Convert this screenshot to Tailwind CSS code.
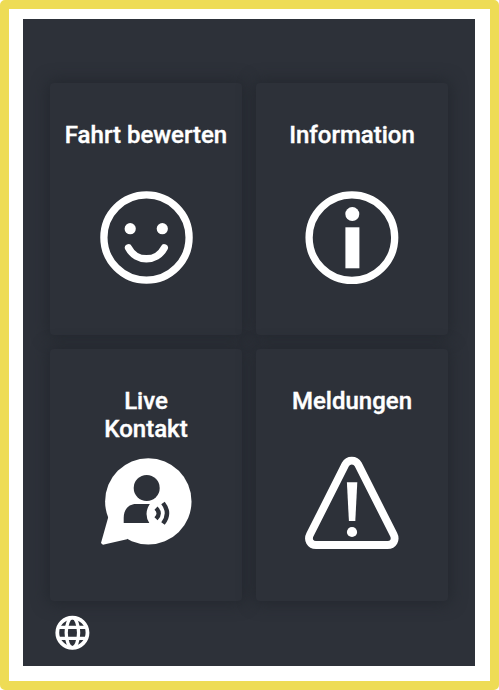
<!DOCTYPE html>
<html lang="de">
<head>
  <meta charset="UTF-8" />
  <meta name="viewport" content="width=device-width, initial-scale=1.0" />
  <title>Menü</title>
  <script src="https://cdn.jsdelivr.net/npm/@tailwindcss/browser@4"></script>
</head>
<body class="bg-white font-['Roboto',sans-serif]">

  <div class="w-[499px] h-[690px] rounded-[5px] border-[9px] border-[#eedc55] bg-[#eedc55]">
    <div class="h-full bg-white pt-[10px] px-[14px]">
      <main class="w-[452px] h-[647px] bg-[#2d3139] pt-16 px-[27px] text-white">

        <nav class="grid grid-cols-[192px_192px] gap-[14px] [-webkit-text-stroke:0.4px_white]">
          <a href="#" class="h-[252px] pt-[38px] flex flex-col items-center rounded-[4px] bg-[#2d3139] shadow-[0_0_16px_2px_#23272e]">
            <h2 class="h-[69px] text-[24px] leading-7 font-medium text-center whitespace-nowrap">Fahrt bewerten</h2>
            <svg class="size-24" viewBox="0 0 96 96" fill="none" stroke="white" stroke-width="7.3" stroke-linecap="round">
              <circle cx="48.5" cy="47.5" r="42.6" />
              <circle cx="32.2" cy="38.7" r="5.6" fill="white" stroke="none" />
              <circle cx="64.3" cy="38.7" r="5.6" fill="white" stroke="none" />
              <path d="M30.5 57.8C38 72.4 58.8 72.4 66.3 57.8" />
            </svg>
          </a>

          <a href="#" class="h-[252px] pt-[38px] flex flex-col items-center rounded-[4px] bg-[#2d3139] shadow-[0_0_16px_2px_#23272e]">
            <h2 class="h-[69px] text-[24px] leading-7 font-medium text-center whitespace-nowrap">Information</h2>
            <svg class="size-24" viewBox="0 0 96 96" fill="white">
              <circle cx="47.9" cy="47.6" r="42.8" fill="none" stroke="white" stroke-width="7.3" />
              <circle cx="48.3" cy="24.1" r="7" />
              <path d="M41.4 37.3h14v41h-14z" />
            </svg>
          </a>

          <a href="#" class="h-[252px] pt-[38px] flex flex-col items-center rounded-[4px] bg-[#2d3139] shadow-[0_0_16px_2px_#23272e]">
            <h2 class="h-[69px] text-[24px] leading-7 font-medium text-center">Live<br />Kontakt</h2>
            <svg class="size-24" viewBox="0 0 96 96" fill="white">
              <circle cx="50.3" cy="45.4" r="43.2" />
              <path d="M10.3 61 3.2 86.2Q3 89 6 88.6L29 83.2 40 60Z" />
              <g fill="#2d3139">
                <circle cx="48.7" cy="32" r="13" />
                <path d="M25.7 67V62C25.7 53.5 30.5 48 38 48H51.8Q45.5 57.5 51.3 67Z" />
              </g>
              <g fill="none" stroke="#2d3139">
                <path d="M58 52.2Q63.4 57.3 58 62.8" stroke-width="4.4" />
                <path d="M65 47Q73 57.3 65 67.5" stroke-width="4.4" />
              </g>
            </svg>
          </a>

          <a href="#" class="h-[252px] pt-[38px] flex flex-col items-center rounded-[4px] bg-[#2d3139] shadow-[0_0_16px_2px_#23272e]">
            <h2 class="h-[69px] text-[24px] leading-7 font-medium text-center">Meldungen</h2>
            <svg class="size-24" viewBox="0 0 96 96" fill="white">
              <path d="M41.4 8.4C44.2 3.3 51.4 3.3 54.2 8.4L89.6 78.6C92.2 83.8 89.4 89 83.6 89H12C6.2 89 3.4 83.8 6 78.6Z" fill="none" stroke="white" stroke-width="7.8" />
              <path d="M42.9 26.3h10.4L51.3 65h-6.4z" />
              <circle cx="48" cy="76" r="5.1" />
            </svg>
          </a>
        </nav>

        <button type="button" class="block mt-[14px] ml-1" aria-label="Sprache">
          <svg class="size-9" viewBox="0 0 36 36" fill="none" stroke="white" stroke-width="3.3">
            <circle cx="18.4" cy="17.7" r="15.1" stroke-width="3.8" />
            <ellipse cx="18.4" cy="17.7" rx="6.2" ry="15" />
            <path d="M4 12.3H32.6M4 23.3H32.6" />
          </svg>
        </button>

      </main>
    </div>
  </div>

</body>
</html>
